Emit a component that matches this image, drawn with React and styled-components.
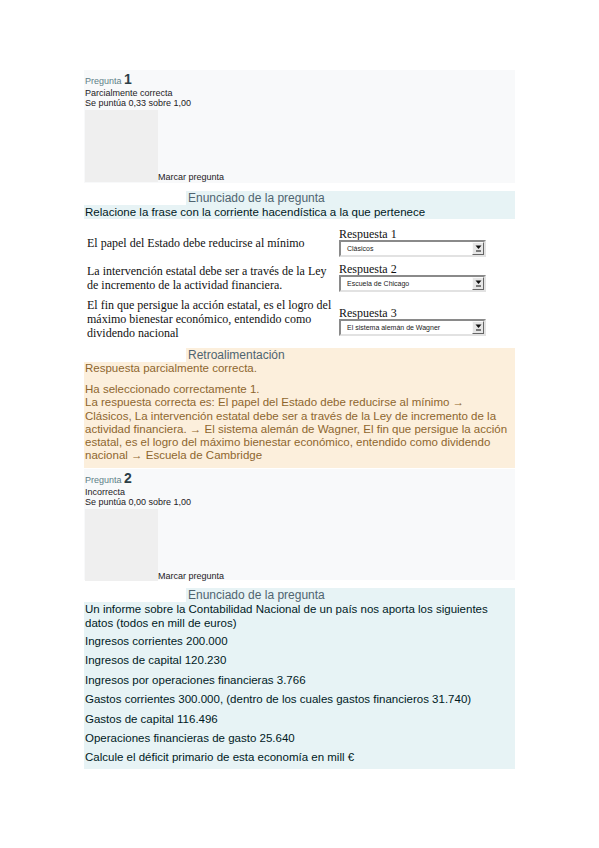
import React from "react";
import styled, { createGlobalStyle } from "styled-components";

const Global = createGlobalStyle`
  html, body { margin: 0; padding: 0; background: #fff; }
  body { font-family: "Liberation Sans", Arial, sans-serif; color: #1d2125; }
`;

const Page = styled.div`
  width: 431px;
  padding: 70px 0 60px 84px;
  display: flex;
  flex-direction: column;
`;

const Info = styled.div`
  background: #f8f9fa;
  padding: 2px 1px 3px 1px;
  height: ${(p) => p.$h}px;
  box-sizing: border-box;
  display: flex;
  flex-direction: column;
  margin-top: ${(p) => p.$mt || 0}px;
`;

const QNo = styled.div`
  color: #5e7f88;
  font-size: 9px;
  line-height: 14px;
  span { color: #2c3e46; font-weight: bold; font-size: 14px; }
`;

const Small = styled.div`
  font-size: 9px;
  line-height: 10px;
  color: #1d2125;
`;

const FlagRow = styled.div`
  display: flex;
  align-items: flex-end;
  margin-top: 2px;
`;

const FlagBox = styled.div`
  width: 73px;
  height: 72px;
  background: #efefef;
`;

const Flag = styled.div`
  font-size: 9px;
  line-height: 10px;
  color: #1d2125;
`;

const Section = styled.div`
  margin-top: ${(p) => p.$mt || 0}px;
  display: flex;
  flex-direction: column;
`;

const Heading = styled.div`
  margin-left: 102px;
  padding-left: 2px;
  background: ${(p) => p.$bg};
  color: #4f6470;
  font-size: 12px;
  line-height: 14px;
`;

const QText = styled.div`
  background: #e7f3f5;
  color: #001a1e;
  font-size: 11.5px;
  line-height: 14px;
  padding: 0 1px ${(p) => p.$pb || 0}px 1px;
  p { margin: 0 0 5.4px 0; }
  p:last-child { margin-bottom: 0; }
  p.first { margin-bottom: 4px; }
`;

const Table = styled.div`
  display: flex;
  flex-direction: column;
  gap: 6px;
  padding: 9px 0 0 3px;
  font-family: "Liberation Serif", "Times New Roman", serif;
  color: #111;
`;

const Row = styled.div`
  display: grid;
  grid-template-columns: 252px 150px;
  align-items: center;
`;

const Phrase = styled.div`
  font-size: 12px;
  line-height: 14px;
`;

const Answer = styled.div`
  display: flex;
  flex-direction: column;
  padding-top: ${(p) => p.$pt || 0}px;
`;

const Label = styled.div`
  font-size: 12px;
  line-height: 12px;
`;

const Select = styled.div`
  width: 147px;
  height: 17px;
  box-sizing: border-box;
  border: 2px solid;
  border-color: #8a8a8a #e2e2e2 #e2e2e2 #8a8a8a;
  background: #fff;
  display: flex;
  align-items: center;
  font-family: "Liberation Sans", Arial, sans-serif;
  font-size: 7px;
  color: #222;
  padding-left: 6px;
`;

const SelText = styled.span`
  flex: 1;
`;

const Arrow = styled.div`
  width: 12px;
  height: 13px;
  box-sizing: border-box;
  border: 1px solid;
  border-color: #fafafa #666 #666 #fafafa;
  background: #e6e6e6;
  display: flex;
  align-items: center;
  justify-content: center;
`;

const Feedback = styled.div`
  background: #fcefdc;
  color: #8e662e;
  font-size: 11.5px;
  line-height: 13.2px;
  padding: 0 3px 5.6px 1px;
  p { margin: 0 0 8px 0; }
  p:last-child { margin-bottom: 0; }
`;

const ArrowGlyph = () => (
  <svg width="7" height="7" viewBox="0 0 7 7">
    <polygon points="0.5,0.5 6.5,0.5 3.5,4" fill="#111" />
    <rect x="1" y="5.5" width="5" height="1" fill="#111" />
  </svg>
);

const matches = [
  {
    text: "El papel del Estado debe reducirse al mínimo",
    label: "Respuesta 1",
    value: "Clásicos",
    pt: 0,
  },
  {
    text: "La intervención estatal debe ser a través de la Ley de incremento de la actividad financiera.",
    label: "Respuesta 2",
    value: "Escuela de Chicago",
    pt: 0,
  },
  {
    text: "El fin que persigue la acción estatal, es el logro del máximo bienestar económico, entendido como dividendo nacional",
    label: "Respuesta 3",
    value: "El sistema alemán de Wagner",
    pt: 4,
  },
];

const data = [
  "Ingresos corrientes 200.000",
  "Ingresos de capital 120.230",
  "Ingresos por operaciones financieras 3.766",
  "Gastos corrientes 300.000, (dentro de los cuales gastos financieros 31.740)",
  "Gastos de capital 116.496",
  "Operaciones financieras de gasto 25.640",
  "Calcule el déficit primario de esta economía en mill €",
];

function QuestionInfo({ n, state, score, h, mt }) {
  return (
    <Info $h={h} $mt={mt}>
      <QNo>
        Pregunta <span>{n}</span>
      </QNo>
      <Small>{state}</Small>
      <Small>{score}</Small>
      <FlagRow>
        <FlagBox />
        <Flag>Marcar pregunta</Flag>
      </FlagRow>
    </Info>
  );
}

export default function App() {
  return (
    <>
      <Global />
      <Page>
        <QuestionInfo n="1" state="Parcialmente correcta" score="Se puntúa 0,33 sobre 1,00" h={113} />
        <Section $mt={8}>
          <Heading $bg="#e7f3f5">Enunciado de la pregunta</Heading>
          <QText>Relacione la frase con la corriente hacendística a la que pertenece</QText>
          <Table>
            {matches.map((m) => (
              <Row key={m.label}>
                <Phrase>{m.text}</Phrase>
                <Answer $pt={m.pt}>
                  <Label>{m.label}</Label>
                  <Select>
                    <SelText>{m.value}</SelText>
                    <Arrow>
                      <ArrowGlyph />
                    </Arrow>
                  </Select>
                </Answer>
              </Row>
            ))}
          </Table>
        </Section>
        <Section $mt={8}>
          <Heading $bg="#fcefdc">Retroalimentación</Heading>
          <Feedback>
            <p>Respuesta parcialmente correcta.</p>
            <p>
              Ha seleccionado correctamente 1.
              <br />
              La respuesta correcta es: El papel del Estado debe reducirse al mínimo → Clásicos, La
              intervención estatal debe ser a través de la Ley de incremento de la actividad
              financiera. → El sistema alemán de Wagner, El fin que persigue la acción estatal, es el
              logro del máximo bienestar económico, entendido como dividendo nacional → Escuela de
              Cambridge
            </p>
          </Feedback>
        </Section>
        <QuestionInfo n="2" state="Incorrecta" score="Se puntúa 0,00 sobre 1,00" h={111} mt={1} />
        <Section $mt={8}>
          <Heading $bg="#e7f3f5">Enunciado de la pregunta</Heading>
          <QText $pb={5}>
            <p className="first">
              Un informe sobre la Contabilidad Nacional de un país nos aporta los siguientes datos
              (todos en mill de euros)
            </p>
            {data.map((d) => (
              <p key={d}>{d}</p>
            ))}
          </QText>
        </Section>
      </Page>
    </>
  );
}
